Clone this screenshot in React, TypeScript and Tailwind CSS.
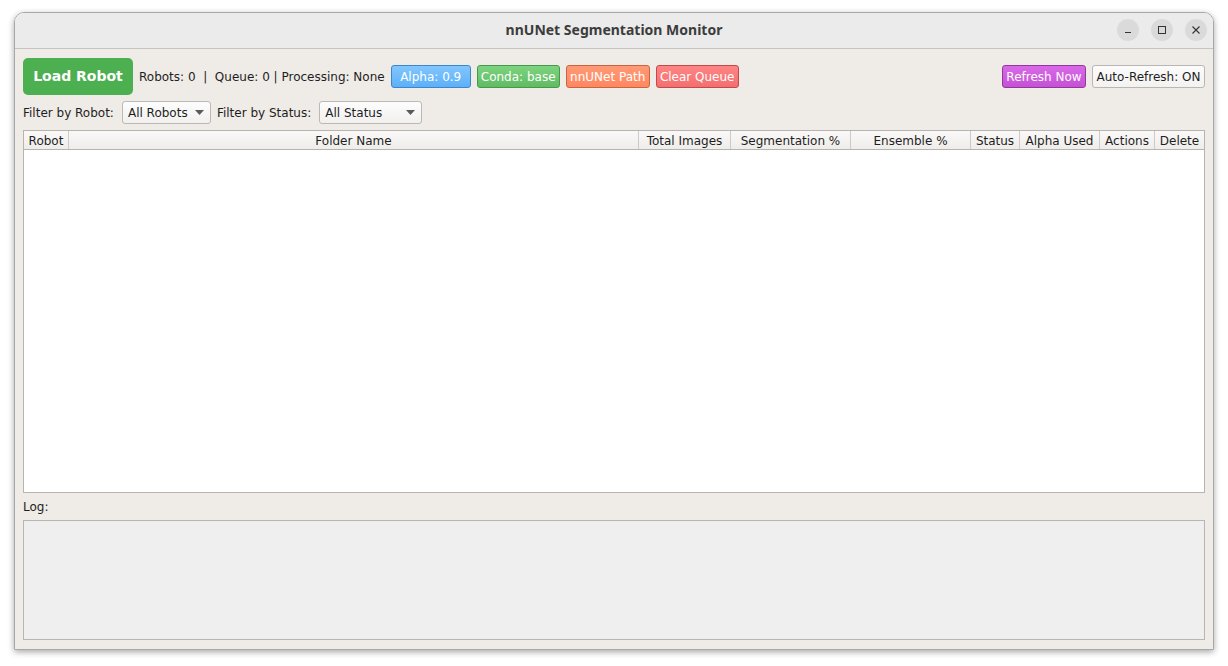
import React from "react";

const font = { fontFamily: '"DejaVu Sans", "Liberation Sans", sans-serif' };

const columns = [
  { label: "Robot", w: "w-[45px]" },
  { label: "Folder Name", w: "w-[570px]" },
  { label: "Total Images", w: "w-[92px]" },
  { label: "Segmentation %", w: "w-[120px]" },
  { label: "Ensemble %", w: "w-[120px]" },
  { label: "Status", w: "w-[49px]" },
  { label: "Alpha Used", w: "w-[80px]" },
  { label: "Actions", w: "w-[55px]" },
  { label: "Delete", w: "flex-1" },
];

function ColorButton({ label, className }: { label: string; className: string }) {
  return (
    <button
      className={`h-[23px] whitespace-nowrap rounded-[3px] border px-0 text-[12px] leading-none text-white ${className}`}
    >
      {label}
    </button>
  );
}

function Combo({ label, width }: { label: string; width: string }) {
  return (
    <div
      className={`flex h-[23px] ${width} items-center justify-between rounded-[3px] border border-[#bcb8b4] bg-gradient-to-b from-[#fdfdfd] to-[#f1f0ef] pl-[5px] pr-[6px] text-[12px] text-[#1e1e1e]`}
    >
      <span>{label}</span>
      <svg width="9" height="5" viewBox="0 0 9 5">
        <path d="M0 0 L9 0 L4.5 5 Z" fill="#5a5a5a" />
      </svg>
    </div>
  );
}

export default function App() {
  return (
    <div className="min-h-[666px] bg-white pl-[14px] pt-[12px]" style={font}>
      <div className="flex h-[638px] w-[1200px] flex-col overflow-hidden rounded-t-[10px] border border-[#a8a8a8] shadow-[0_2px_6px_rgba(0,0,0,0.35)]">
        {/* title bar */}
        <div className="relative flex h-[36px] shrink-0 items-center justify-center border-b border-[#c4c4c4] bg-[#ebebeb]">
          <span
            className="-mt-[2px] text-[14px] font-bold text-[#3c3c3c]"
            style={{ fontFamily: '"Noto Sans", "Open Sans", sans-serif' }}
          >
            nnUNet Segmentation Monitor
          </span>
          <div className="absolute right-[6px] top-[6px] flex gap-[12px]">
            <div className="flex h-[22px] w-[22px] items-center justify-center rounded-full bg-[#dadada]">
              <svg width="10" height="10" viewBox="0 0 10 10">
                <path d="M2 7.5 H8" stroke="#333" strokeWidth="1" />
              </svg>
            </div>
            <div className="flex h-[22px] w-[22px] items-center justify-center rounded-full bg-[#dadada]">
              <svg width="10" height="10" viewBox="0 0 10 10">
                <rect x="1.5" y="1.5" width="7" height="7" fill="none" stroke="#333" strokeWidth="1" />
              </svg>
            </div>
            <div className="flex h-[22px] w-[22px] items-center justify-center rounded-full bg-[#dadada]">
              <svg width="10" height="10" viewBox="0 0 10 10">
                <path d="M1.5 1.5 L8.5 8.5 M8.5 1.5 L1.5 8.5" stroke="#333" strokeWidth="1.1" />
              </svg>
            </div>
          </div>
        </div>

        {/* body */}
        <div className="flex flex-1 flex-col bg-[#efebe7] px-[8px] pt-[9px] text-[12px] text-[#1e1e1e]">
          <div className="flex h-[37px] items-center">
            <button className="h-[37px] w-[110px] rounded-[5px] bg-[#4caf50] text-[14px] font-bold text-white">
              Load Robot
            </button>
            <span className="ml-[6px] whitespace-pre">Robots: 0  |  Queue: 0 | Processing: None</span>
            <div className="ml-[6px] flex gap-[6px]">
              <ColorButton label="Alpha: 0.9" className="w-[80px] border-[#3f86c8] bg-gradient-to-b from-[#82c6ff] to-[#5cb0f8]" />
              <ColorButton label="Conda: base" className="w-[83px] border-[#47984a] bg-gradient-to-b from-[#7dd480] to-[#60bb63]" />
              <ColorButton label="nnUNet Path" className="w-[84px] border-[#c8643f] bg-gradient-to-b from-[#ff9a76] to-[#ff8760]" />
              <ColorButton label="Clear Queue" className="w-[83px] border-[#c4494a] bg-gradient-to-b from-[#ff8585] to-[#f36f6f]" />
            </div>
            <div className="ml-auto flex gap-[6px]">
              <ColorButton label="Refresh Now" className="w-[84px] border-[#8f3a9b] bg-gradient-to-b from-[#da69ea] to-[#c551d4]" />
              <button className="h-[23px] w-[113px] whitespace-nowrap rounded-[3px] border border-[#b9b6b3] bg-gradient-to-b from-[#fcfcfc] to-[#f3f2f1] px-0 text-[12px] leading-none text-[#1e1e1e]">
                Auto-Refresh: ON
              </button>
            </div>
          </div>

          <div className="mt-[6px] flex h-[23px] items-center">
            <span>Filter by Robot:</span>
            <div className="ml-[8px]">
              <Combo label="All Robots" width="w-[89px]" />
            </div>
            <span className="ml-[6px]">Filter by Status:</span>
            <div className="ml-[8px]">
              <Combo label="All Status" width="w-[103px]" />
            </div>
          </div>

          {/* table */}
          <div className="mt-[6px] flex h-[363px] w-[1182px] flex-col border border-[#b6b3b0] bg-white">
            <div className="flex h-[19px] shrink-0 border-b border-[#b6b3b0] bg-gradient-to-b from-[#faf9f8] to-[#efedea]">
              {columns.map((c, i) => (
                <div
                  key={c.label}
                  className={`flex items-center justify-center pt-[1px] ${c.w} ${i < columns.length - 1 ? "border-r border-[#cdcac7]" : ""}`}
                >
                  {c.label}
                </div>
              ))}
            </div>
            <div className="flex-1" />
          </div>

          <div className="flex h-[27px] items-center">Log:</div>
          <div className="h-[120px] w-[1182px] border border-[#b8b5b2] bg-[#efefef]" />
        </div>
      </div>
    </div>
  );
}
